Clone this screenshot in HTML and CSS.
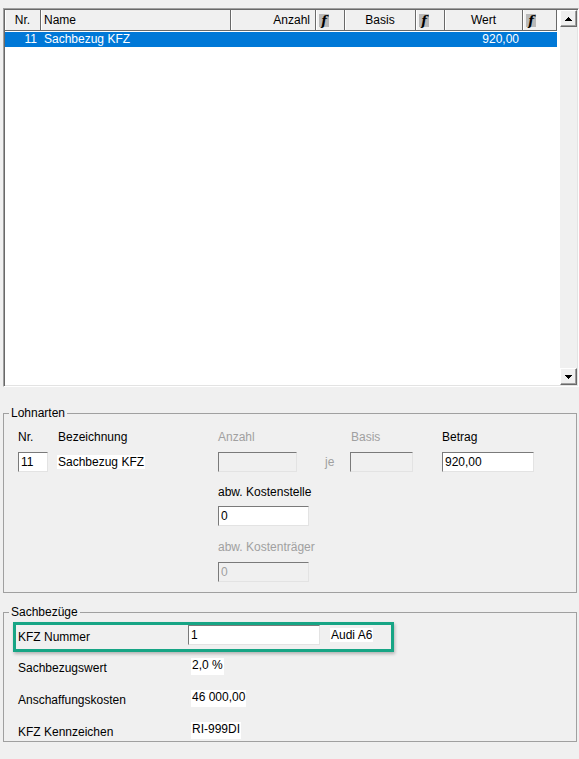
FILE: index.html
```html
<!DOCTYPE html>
<html>
<head>
    <title>Lohnarten</title>
    <link rel="stylesheet" href="styles.css">
</head>
<body>
    <!-- wage type list -->
    <div class="list">
        <div class="grid">
            <div class="head">
                <div class="hc center">Nr.</div>
                <div class="hc name">Name</div>
                <div class="hc right">Anzahl</div>
                <div class="hc fx"><span class="f">f</span></div>
                <div class="hc center">Basis</div>
                <div class="hc fx"><span class="f">f</span></div>
                <div class="hc center">Wert</div>
                <div class="hc fx"><span class="f">f</span></div>
            </div>
            <div class="row selected">
                <div class="right">11</div>
                <div class="name">Sachbezug KFZ</div>
                <div></div>
                <div></div>
                <div></div>
                <div></div>
                <div class="right">920,00</div>
                <div></div>
            </div>
        </div>
        <div class="scroll">
            <div class="sbtn">
                <svg width="7" height="4" viewBox="0 0 7 4"><path d="M3 0h1v1h1v1h1v1h1v1H0V3h1V2h1V1h1z" fill="#000"/></svg>
            </div>
            <div class="track"></div>
            <div class="sbtn">
                <svg width="7" height="4" viewBox="0 0 7 4"><path d="M0 0h7v1H6v1H5v1H4v1H3V3H2V2H1V1H0z" fill="#000"/></svg>
            </div>
        </div>
    </div>

    <fieldset class="group">
        <legend>Lohnarten</legend>
        <div class="wage">
            <div>Nr.</div>
            <div class="c2">Bezeichnung</div>
            <div class="c3 off">Anzahl</div>
            <div class="c5 off shift">Basis</div>
            <div class="c6">Betrag</div>

            <input class="field shift w30" value="11" readonly>
            <div class="c2 mid"><span class="val pull">Sachbezug KFZ</span></div>
            <input class="field c3 shift w79" disabled>
            <div class="c4 mid off">je</div>
            <input class="field c5 shift w63" disabled>
            <input class="field c6 w92" value="920,00" readonly>

            <div class="c3 wide tail7">abw. Kostenstelle</div>
            <input class="field c3 shift w91 r4" value="0" readonly>

            <div class="c3 wide tail8 off">abw. Kostenträger</div>
            <input class="field c3 shift w91 r6" value="0" disabled>
        </div>
    </fieldset>

    <fieldset class="group second">
        <legend>Sachbezüge</legend>
        <div class="benefits">
            <div class="car">
                <div class="car-label">KFZ Nummer</div>
                <input class="field w132" value="1" readonly>
                <div class="car-name"><span class="val">Audi A6</span></div>
            </div>
            <div class="facts">
                <div class="fact-label">Sachbezugswert</div>
                <span class="val">2,0 %</span>
                <div class="fact-label">Anschaffungskosten</div>
                <span class="val">46 000,00</span>
                <div class="fact-label">KFZ Kennzeichen</div>
                <span class="val">RI-999DI</span>
            </div>
        </div>
    </fieldset>
</body>
</html>
```

FILE: styles.css
```css
body {
    margin: 0;
    padding-top: 8px;
    background: #f0f0f0;
    font-family: "Liberation Sans", Arial, sans-serif;
    font-size: 12px;
    line-height: 14px;
    color: #000;
    height: 751px;
    overflow: hidden;
}

/* list view */
.list {
    display: flex;
    margin-left: 3px;
    width: 576px;
    height: 379px;
    box-sizing: border-box;
    border: 1px solid;
    border-color: #a0a0a0 #fff #fff #a0a0a0;
    box-shadow: inset 1px 1px #696969, inset -1px -1px #e3e3e3;
    padding: 1px;
    background: #fff;
}
.grid {
    flex: 1;
}
.head,
.row {
    display: grid;
    grid-template-columns: 36px 190px 85px 29px 71px 29px 78px 34px;
    width: 552px;
}
.head {
    height: 21px;
    background: #f0f0f0;
    border-bottom: 1px solid #696969;
    box-sizing: border-box;
}
.hc {
    display: flex;
    align-items: center;
    border-right: 1px solid #696969;
    box-shadow: inset 1px 0 #fff;
    padding: 0 5px 0 3px;
    white-space: nowrap;
}
.hc.center { justify-content: center; padding: 0; }
.hc.right { justify-content: flex-end; }
.hc.fx { padding: 0 0 0 3px; }
.f {
    display: inline-block;
    width: 10px;
    height: 13px;
    background: #b9b9b9;
    font-family: "DejaVu Serif", serif;
    font-weight: bold;
    font-style: italic;
    font-size: 13px;
    line-height: 13px;
    text-align: center;
}
.row {
    height: 15px;
    line-height: 15px;
    margin-top: 1px;
}
.row .right { text-align: right; padding-right: 4px; }
.row .name { padding-left: 3px; white-space: nowrap; }
.selected {
    background: #0078d7;
    color: #fff;
}

/* vertical scroll bar */
.scroll {
    width: 17px;
    display: flex;
    flex-direction: column;
    background: #f0f0f0;
    border-left: 1px solid #fff;
}
.sbtn {
    height: 17px;
    box-sizing: border-box;
    display: flex;
    align-items: center;
    justify-content: center;
    background: #f0f0f0;
    border: 1px solid;
    border-color: #fff #696969 #696969 #fff;
    box-shadow: inset -1px -1px #a0a0a0;
}
.sbtn svg { display: block; }
.track { flex: 1; }

/* group boxes */
.group {
    margin: 19px 2px 0 3px;
    padding: 0;
    border: 1px solid #a0a0a0;
    min-width: 0;
}
.group legend {
    margin-left: 5px;
    padding: 0 2px;
    line-height: 14px;
}
.group.second { margin-top: 12px; }

.wage {
    display: grid;
    grid-template-columns: 40px 160px 107px 25px 92px 1fr;
    grid-template-rows: 22px 20px 34px 20px 36px 20px;
    padding: 10px 0 10px 14px;
}
.wage > div { white-space: nowrap; }
.c2 { grid-column: 2; }
.c3 { grid-column: 3; }
.c4 { grid-column: 4; }
.c5 { grid-column: 5; }
.c6 { grid-column: 6; }
.wide { grid-column: 3 / span 4; }
.r4 { grid-row: 4; }
.r6 { grid-row: 6; }
.mid { align-self: center; }
.shift { margin-left: 1px; }
.pull { margin-left: -1px; }
.tail7 { align-self: end; margin-bottom: 7px; }
.tail8 { align-self: end; margin-bottom: 8px; }
.off { color: #a0a0a0; }

.field {
    box-sizing: border-box;
    height: 20px;
    padding: 0 2px;
    margin: 0;
    border: 1px solid;
    border-color: #7a7a7a #e3e3e3 #e3e3e3 #7a7a7a;
    background: #fff;
    font: 12px "Liberation Sans", Arial, sans-serif;
    color: #000;
    outline: none;
}
.field:disabled {
    background: #f0f0f0;
    color: #a0a0a0;
}
.w30 { width: 30px; }
.w63 { width: 63px; }
.w79 { width: 79px; }
.w91 { width: 91px; }
.w92 { width: 92px; }
.w132 { width: 132px; }

.val {
    background: #fff;
    padding: 0 1px;
    justify-self: start;
    white-space: nowrap;
}

.benefits {
    padding: 3px 0 2px 9px;
}
.car {
    display: grid;
    grid-template-columns: 160px 132px auto;
    column-gap: 10px;
    align-items: start;
    width: 381px;
    height: 30px;
    box-sizing: border-box;
    border: 3px solid #17a585;
    padding: 0 0 4px 2px;
    box-shadow: 1px 2px 3px rgba(0, 0, 0, 0.25);
}
.car-label { margin-top: 5px; }
.car-name { margin-top: 3px; }

.facts {
    display: grid;
    grid-template-columns: 173px auto;
    grid-auto-rows: 17px;
    row-gap: 15px;
    margin-top: 6px;
    padding-left: 5px;
}
.fact-label { margin-top: 3px; }
```
